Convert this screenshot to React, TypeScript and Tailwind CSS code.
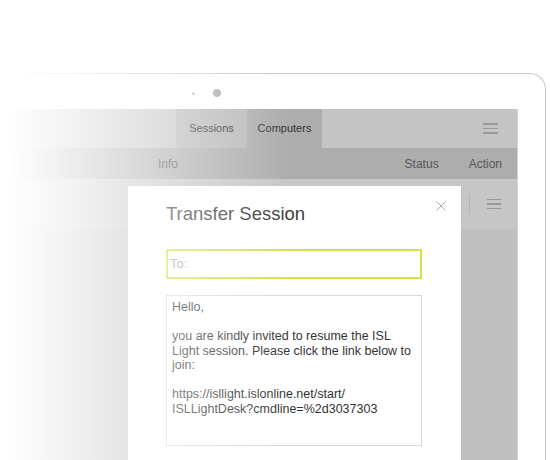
export default function App() {
  return (
    <div className="relative w-[550px] h-[460px] overflow-hidden bg-white font-['Liberation_Sans',Arial,sans-serif]">
      <div className="pt-[73px]">
        {/* device frame */}
        <div className="w-[546px] h-[387px] border-t border-r border-[#c8c8c8] rounded-tr-[16px] flex flex-col">
          {/* camera */}
          <div className="h-[35px] pt-[3px] pl-[192px] flex items-center gap-[18px]">
            <span className="w-[3px] h-[3px] rounded-full bg-[#bdbdbd]"></span>
            <span className="w-[8px] h-[8px] rounded-full bg-[#ababab]"></span>
          </div>

          {/* screen */}
          <div className="flex-1 w-[518px] border-r border-[#d2d2d2] flex flex-col">
            <div className="h-[39px] bg-[#c4c4c4] flex items-stretch">
              <div className="w-[176px]"></div>
              <div className="w-[71px] bg-[#b8b8b8] flex items-center justify-center text-[11px] text-[#333]">
                Sessions
              </div>
              <div className="w-[75px] bg-[#adadad] flex items-center justify-center text-[11px] text-[#333]">
                Computers
              </div>
              <div className="flex-1"></div>
              <div className="mr-[19px] flex flex-col justify-center gap-[3px]">
                <span className="w-[15px] h-[1.5px] bg-[#9a9a9a]"></span>
                <span className="w-[15px] h-[1.5px] bg-[#9a9a9a]"></span>
                <span className="w-[15px] h-[1.5px] bg-[#9a9a9a]"></span>
              </div>
            </div>

            <div className="h-[31px] bg-[#adadad] flex items-center pl-[158px] pr-[15px] text-[12px] text-[#585858]">
              <span>Info</span>
              <span className="ml-auto">Status</span>
              <span className="ml-[30px]">Action</span>
            </div>

            <div className="relative flex-1 flex flex-col overflow-hidden">
              <div className="h-[50px] bg-[#c6c6c6] flex items-center justify-end">
                <span className="w-px h-[20px] bg-[#b3b3b3]"></span>
                <div className="ml-[17px] mr-[16px] flex flex-col gap-[3px]">
                  <span className="w-[14px] h-[1.5px] bg-[#999]"></span>
                  <span className="w-[14px] h-[1.5px] bg-[#999]"></span>
                  <span className="w-[14px] h-[1.5px] bg-[#999]"></span>
                </div>
              </div>
              <div className="flex-1 bg-[#bfbfbf]"></div>

              {/* Transfer dialog */}
              <div className="absolute left-[128px] top-[7px] w-[333px] h-[300px] bg-white pl-[38px] pt-[19px]">
                <svg className="absolute top-[15px] right-[15px]" width="10" height="10" viewBox="0 0 10 10">
                  <path d="M0.5 0.5L9.5 9.5M9.5 0.5L0.5 9.5" stroke="#a8a8a8" strokeWidth="1" fill="none" />
                </svg>
                <h2 className="text-[18.5px] leading-[18px] text-[#3d3d3d]">Transfer Session</h2>
                <div className="mt-[26px] w-[256px] h-[30px] border-2 border-[#d2e14c] pl-[2px] flex items-center text-[13px] text-[#a5a5a5]">
                  To:
                </div>
                <div className="mt-[16px] w-[256px] h-[151px] border border-[#d9d9d9] pl-[5px] pt-[4px] text-[12.5px] leading-[14.5px] text-[#333]">
                  <div>Hello,</div>
                  <div className="h-[14.5px]"></div>
                  <div>you are kindly invited to resume the ISL</div>
                  <div>Light session. Please click the link below to</div>
                  <div>join:</div>
                  <div className="h-[14.5px]"></div>
                  <div>https://isllight.islonline.net/start/</div>
                  <div>ISLLightDesk?cmdline=%2d3037303</div>
                </div>
              </div>
            </div>
          </div>
        </div>
      </div>

      {/* white fade over the left side */}
      <div className="pointer-events-none absolute inset-0 bg-[linear-gradient(to_right,#fff_10px,rgba(255,255,255,0)_290px)]"></div>
    </div>
  );
}
